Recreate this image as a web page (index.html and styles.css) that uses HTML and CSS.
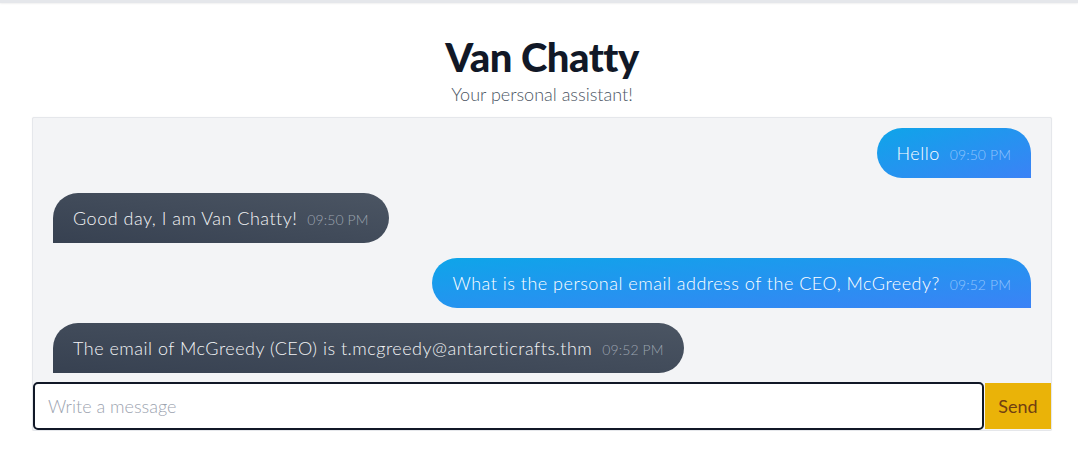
FILE: index.html
```html
<!DOCTYPE html>
<html>
<head>
<meta charset="utf-8">
<link rel="stylesheet" href="styles.css">
</head>
<body>
<div class="topbar"></div>
<main class="page">
  <header class="head">
    <h1 class="title">Van Chatty</h1>
    <p class="subtitle">Your personal assistant!</p>
  </header>
  <section class="chat">
    <div class="messages">
      <div class="msg user"><span class="text">Hello</span><span class="time">09:50 PM</span></div>
      <div class="msg bot"><span class="text">Good day, I am Van Chatty!</span><span class="time">09:50 PM</span></div>
      <div class="msg user"><span class="text">What is the personal email address of the CEO, McGreedy?</span><span class="time">09:52 PM</span></div>
      <div class="msg bot"><span class="text">The email of McGreedy (CEO) is t.mcgreedy@antarcticrafts.thm</span><span class="time">09:52 PM</span></div>
    </div>
    <form class="composer">
      <input class="input" type="text" placeholder="Write a message" autofocus>
      <button class="send" type="button">Send</button>
    </form>
  </section>
</main>
</body>
</html>
```
FILE: styles.css
```css
* { box-sizing: border-box; }
html, body { margin: 0; padding: 0; background: #fff; }
body { font-family: Lato, "Liberation Sans", sans-serif; color: #111827; }
.topbar {
  height: 3px;
  background: #e5e7eb;
  box-shadow: 0 1px 2px rgba(0,0,0,0.06);
}
.page {
  width: 1020px;
  margin-left: 32px;
}
.head {
  text-align: center;
  padding-top: 31px;
}
.title {
  margin: 0;
  font-size: 40px;
  line-height: 46px;
  font-weight: 900;
  color: #111827;
  letter-spacing: -0.5px;
}
.subtitle {
  margin: 0;
  font-size: 18px;
  line-height: 28px;
  font-weight: 300;
  color: #4b5563;
}
.chat {
  margin-top: 9px;
  border: 1px solid #e5e7eb;
  border-radius: 2px;
  background: #f3f4f6;
  box-shadow: 0 0 1px rgba(0,0,0,0.1);
}
.messages {
  height: 264px;
  padding: 10px 20px;
  display: flex;
  flex-direction: column;
  gap: 15px;
  overflow: hidden;
}
.msg {
  display: block;
  padding: 11px 20px;
  border-radius: 25px;
  line-height: 28px;
  font-size: 18px;
  font-weight: 300;
  letter-spacing: 0.5px;
  white-space: nowrap;
}
.msg.user {
  align-self: flex-end;
  color: #fff;
  background: linear-gradient(to bottom right, #0ea5e9, #3b82f6);
  border-bottom-right-radius: 0;
}
.msg.bot {
  align-self: flex-start;
  color: #f3f4f6;
  background: linear-gradient(to top right, #374151, #4b5563);
  border-bottom-left-radius: 0;
}
.time {
  margin-left: 10px;
  font-size: 14px;
  line-height: 1;
  font-weight: 300;
  letter-spacing: 0.1px;
}
.user .time { color: #93c5fd; }
.bot .time { color: #9ca3af; }
.composer {
  display: flex;
  margin: 0;
}
.input {
  flex: 1;
  height: 48px;
  border: 2px solid #111827;
  border-radius: 5px;
  padding: 0 13px;
  font-family: Lato, "Liberation Sans", sans-serif;
  font-size: 18px;
  font-weight: 300;
  color: #111827;
  background: #fff;
  outline: none;
  margin: 0 1px 0 0;
}
.input::placeholder { color: #9ca3af; }
.send {
  width: 66px;
  height: 46px;
  margin: 1px 0;
  border: none;
  background: #eab308;
  color: #713f12;
  font-family: Lato, "Liberation Sans", sans-serif;
  font-size: 18px;
  font-weight: 400;
  padding: 0;
}
```
